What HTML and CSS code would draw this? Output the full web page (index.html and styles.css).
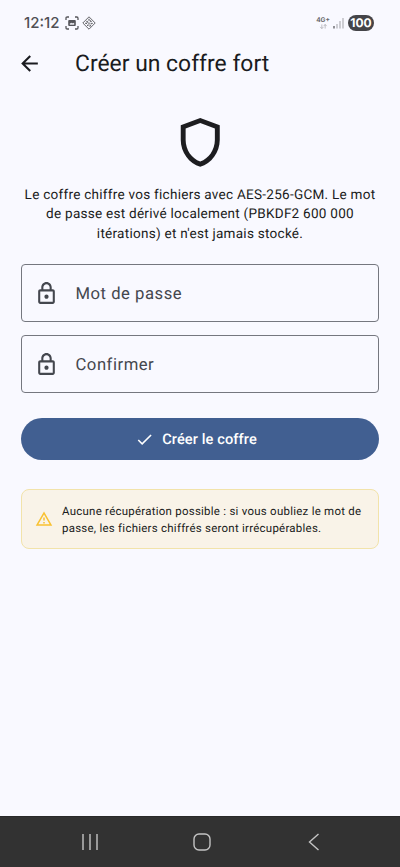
FILE: index.html
```html
<!DOCTYPE html>
<html lang="fr">
<head>
<meta charset="utf-8">
<meta name="viewport" content="width=device-width, initial-scale=1">
<title>Créer un coffre fort</title>
<link rel="stylesheet" href="styles.css">
</head>
<body>
<div class="screen">
  <div class="status">
    <span class="clock">12:12</span>
    <svg class="capture" viewBox="0 0 14 14"><path d="M1 4V2.200Q1 1 2.200 1H4M10 1h1.800Q13 1 13 2.200V4M13 10v1.800q0 1.200-1.200 1.200H10M4 13H2.200Q1 13 1 11.800V10" fill="none" stroke="#55555a" stroke-width="1.300"/><rect x="3.200" y="4" width="7.600" height="6" rx="1" fill="#55555a"/><path d="M4.800 8.800V7.500l1.700-.8 1 .6 1.700-.6v2.100z" fill="#e4e4ea"/></svg>
    <svg class="diamond" viewBox="0 0 14 14"><path d="M7 .8L13.200 7 7 13.200.8 7z" fill="none" stroke="#66666a" stroke-width="1" stroke-linejoin="round"/><path d="M7 2.800v2M4.500 5l1.500 1.500M8 4.500L9.500 6M3.200 7.300h1.800M7 6.500v2M8.500 8l2.200-.8M5 9.300h1.500M7.500 10.500L8.800 9.300" fill="none" stroke="#66666a" stroke-width="1.200"/></svg>
    <span class="spacer"></span>
    <span class="network"><b>4G+</b><svg viewBox="0 0 10 6"><path d="M3 .5v5M1 3.500l2 2 2-2M7 5.500v-5M5.200 2.500L7 .5l1.800 2" fill="none" stroke="#aaaab0" stroke-width=".9"/></svg></span>
    <svg class="signal" viewBox="0 0 11 12"><path d="M1 9v2.500" stroke="#77777c" stroke-width="1.600"/><path d="M4 7v4.500M7 4v7.500M10 1v10.500" stroke="#c3c3c9" stroke-width="1.600"/></svg>
    <span class="battery">100</span>
  </div>
  <header class="appbar">
    <svg class="back" viewBox="0 0 24 24"><path d="M20 11H7.830l5.590-5.590L12 4l-8 8 8 8 1.410-1.410L7.830 13H20v-2z"/></svg>
    <h1>Créer un coffre fort</h1>
  </header>
  <main>
    <svg class="shield" viewBox="0 0 24 24"><path d="M12 2L4 5v6.090c0 5.050 3.410 9.760 8 10.910 4.590-1.150 8-5.860 8-10.910V5l-8-3zm6 9.090c0 4-2.550 7.700-6 8.830-3.450-1.130-6-4.820-6-8.830v-4.700l6-2.250 6 2.250v4.700z"/></svg>
    <p class="intro">Le coffre chiffre vos fichiers avec AES-256-GCM. Le mot<br>de passe est dérivé localement (PBKDF2 600 000<br>itérations) et n'est jamais stocké.</p>
    <div class="field">
      <svg viewBox="0 0 24 24"><path d="M18 8h-1V6c0-2.760-2.240-5-5-5S7 3.240 7 6v2H6c-1.100 0-2 .9-2 2v10c0 1.100.9 2 2 2h12c1.100 0 2-.9 2-2V10c0-1.100-.9-2-2-2zM9 6c0-1.660 1.340-3 3-3s3 1.340 3 3v2H9V6zm9 14H6V10h12v10zm-6-3c1.100 0 2-.9 2-2s-.9-2-2-2-2 .9-2 2 .9 2 2 2z"/></svg>
      <span>Mot de passe</span>
    </div>
    <div class="field">
      <svg viewBox="0 0 24 24"><path d="M18 8h-1V6c0-2.760-2.240-5-5-5S7 3.240 7 6v2H6c-1.100 0-2 .9-2 2v10c0 1.100.9 2 2 2h12c1.100 0 2-.9 2-2V10c0-1.100-.9-2-2-2zM9 6c0-1.660 1.340-3 3-3s3 1.340 3 3v2H9V6zm9 14H6V10h12v10zm-6-3c1.100 0 2-.9 2-2s-.9-2-2-2-2 .9-2 2 .9 2 2 2z"/></svg>
      <span>Confirmer</span>
    </div>
    <button class="create" type="button">
      <svg viewBox="0 0 24 24"><path d="M9 16.170L4.830 12l-1.420 1.410L9 19 21 7l-1.410-1.410z"/></svg>
      <span>Créer le coffre</span>
    </button>
    <div class="warning">
      <svg viewBox="0 0 24 24"><path d="M12 5.990L19.530 19H4.470L12 5.990M12 2L1 21h22L12 2zm1 14h-2v2h2v-2zm0-6h-2v4h2v-4z"/></svg>
      <p>Aucune récupération possible : si vous oubliez le mot de<br>passe, les fichiers chiffrés seront irrécupérables.</p>
    </div>
  </main>
  <nav class="navbar">
    <svg viewBox="0 0 20 20"><path d="M3 2v16M10 2v16M17 2v16"/></svg>
    <svg viewBox="0 0 20 20"><rect x="2" y="2" width="16" height="16" rx="5"/></svg>
    <svg viewBox="0 0 20 20"><path d="M14.500 2L5.500 10l9 8"/></svg>
  </nav>
</div>
</body>
</html>
```
FILE: styles.css
```css
* { box-sizing: border-box; }
body { margin: 0; background: #f9f9ff; font-family: Roboto, sans-serif; color: #1a1b20; text-rendering: geometricPrecision; }
h1, p { margin: 0; font-weight: 400; }
svg { flex: none; display: block; }
.screen { width: 400px; height: 867px; display: flex; flex-direction: column; overflow: hidden; }

.status { height: 37px; padding: 8px 26px 0 24px; display: flex; align-items: center; }
.clock { width: 35px; font: 500 15px/20px Inter, sans-serif; letter-spacing: 0; color: #505055; white-space: nowrap; }
.capture { width: 14px; height: 14px; margin-left: 6px; }
.diamond { width: 14px; height: 14px; margin-left: 3px; }
.spacer { flex: 1; }
.network { width: 14px; font: 6.5px/7px Inter, sans-serif; color: #66666a; display: flex; flex-direction: column; align-items: center; }
.network svg { width: 9px; height: 5px; }
.signal { width: 11px; height: 12px; margin: 0 4px 0 3px; }
.battery { width: 26px; height: 16px; border-radius: 8px; background: #444448; color: #fff; font: 700 12px/16px Inter, sans-serif; text-align: center; }

.appbar { height: 54px; padding: 0 17px; display: flex; align-items: center; }
.back { width: 25px; height: 25px; margin: 0 0 1px; fill: #1a1b20; }
h1 { margin-left: 33px; font-size: 22.9px; line-height: 30px; white-space: nowrap; }

main { flex: 1; padding: 22px 21px 0; }
.shield { width: 58.500px; height: 58.500px; margin: 0 auto; fill: #1d1d20; }
.intro { margin: 14px -5px 19.500px; font-size: 13.54px; line-height: 19.8px; letter-spacing: .26px; text-align: center; white-space: nowrap; }
.field { height: 58px; margin-bottom: 13px; padding-left: 11.500px; border: 1px solid #75777f; border-radius: 4px; display: flex; align-items: center; color: #44474e; }
.field svg { width: 25px; height: 25px; fill: #44474e; }
.field span { margin-left: 17px; padding-top: 2px; font-size: 16.67px; letter-spacing: .52px; }
.create { width: 100%; height: 42px; margin-top: 25px; padding: 0 8px 0 0; border: 0; border-radius: 21px; background: #415f91; color: #fff; display: flex; align-items: center; justify-content: center; gap: 8px; font: 500 14.6px/20px Roboto, sans-serif; letter-spacing: .1px; text-rendering: inherit; }
.create svg { width: 19px; height: 19px; fill: #fff; }
.warning { height: 60px; margin-top: 29px; padding-left: 13px; border: 1px solid #f2e3aa; border-radius: 8px; background: #f9f3e8; display: flex; align-items: center; gap: 9px; }
.warning svg { width: 18px; height: 18px; fill: #f9c130; }
.warning p { padding-top: 2px; font-size: 11.46px; line-height: 17px; letter-spacing: .26px; white-space: nowrap; }

.navbar { height: 51px; border-top: 1px solid #292929; background: #323232; display: flex; align-items: center; justify-content: space-between; padding: 0 76px 0 80px; }
.navbar svg { width: 20px; height: 20px; fill: none; stroke: #c4c4c4; stroke-width: 1.4; }
```
